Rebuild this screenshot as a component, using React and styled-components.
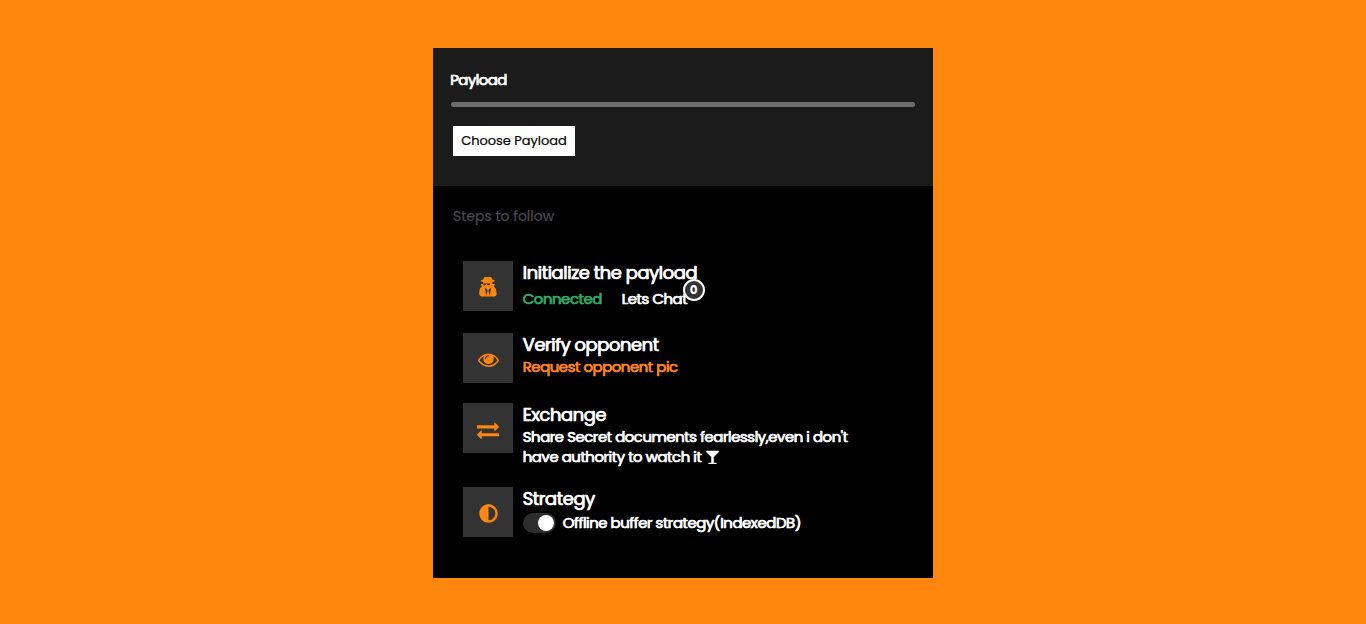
import React, { useState } from 'react';
import styled, { createGlobalStyle } from 'styled-components';
import { FaAdjust } from 'react-icons/fa';

const GlobalStyle = createGlobalStyle`
  * {
    box-sizing: border-box;
  }

  body {
    margin: 0;
    background: #ff870d;
    font-family: Poppins, Inter, 'Liberation Sans', sans-serif;
  }
`;

const SecretIcon = () => (
  <svg viewBox='0 0 1792 1792' fill='currentColor'>
    <path d='M768 1536l96-448-96-128-128-64zm256 0l128-640-128 64-96 128zM1312 526q-2-4-4-6-10-8-96-8-70 0-167 19-7 2-149 2t-149-2q-97-19-167-19-86 0-96 8-2 2-4 6 2 18 4 27 15 10 22 31 25 100 130 100 70 0 92-68 12-44 28-44h40q16 0 28 44 22 68 92 68 105 0 130-100 7-21 22-31 2-9 4-27zm304 807q0 121-73 190t-194 69h-906q-121 0-194-69t-73-190q0-61 4.500-118t19-125.500 37.500-123.500 63.500-103.500 93.500-74.500l-90-220h214q-22-64-22-128 0-12 2-32-194-40-194-96 0-57 210-99 17-62 51.500-134t70.500-114q32-37 76-37 30 0 84 31t84 31 84-31 84-31q44 0 76 37 36 42 70.500 114t51.500 134q210 42 210 99 0 56-194 96 7 81-20 160h214l-82 225q63 33 107.500 96.500t65.500 143.500 29 151.500 8 148.500z' fillRule='evenodd' />
  </svg>
);

const EyeIcon = () => (
  <svg viewBox='0 0 1792 1792' fill='currentColor'>
    <path d='M1664 960q-152-236-381-353 61 104 61 225 0 185-131.5 316.5t-316.5 131.5-316.5-131.5-131.5-316.5q0-121 61-225-229 117-381 353 133 205 333.5 326.5t434.5 121.5 434.5-121.5 333.5-326.5zm-720-384q0-20-14-34t-34-14q-125 0-214.5 89.5t-89.5 214.5q0 20 14 34t34 14 34-14 14-34q0-86 61-147t147-61q20 0 34-14t14-34zm848 384q0 34-20 69-140 230-376.5 368.5t-499.5 138.5-499.5-139-376.5-368q-20-35-20-69t20-69q140-229 376.5-368t499.5-139 499.5 139 376.5 368q20 35 20 69z' />
  </svg>
);

const ExchangeIcon = () => (
  <svg viewBox='0 0 1792 1792' fill='currentColor'>
    <path d='M1792 1184v192q0 13-9.5 22.5t-22.5 9.5h-1376v192q0 13-9.5 22.5t-22.5 9.5q-12 0-24-10l-319-320q-9-9-9-22 0-14 9-23l320-320q9-9 23-9 13 0 22.5 9.5t9.5 22.5v192h1376q13 0 22.5 9.5t9.5 22.5zm0-544q0 14-9 23l-320 320q-9 9-23 9-13 0-22.5-9.5t-9.5-22.5v-192h-1376q-13 0-22.5-9.5t-9.5-22.5v-192q0-13 9.5-22.5t22.5-9.5h1376v-192q0-14 9-23t23-9q12 0 24 10l319 319q9 9 9 23z' />
  </svg>
);

const GlassIcon = () => (
  <svg viewBox='0 0 1792 1792' fill='currentColor' stroke='currentColor' strokeWidth='70'>
    <path d='M1699 186q0 35-43 78l-632 632v768h320q26 0 45 19t19 45-19 45-45 19h-896q-26 0-45-19t-19-45 19-45 45-19h320v-768l-632-632q-43-43-43-78 0-23 18-36.5t38-17.5 43-4h1408q23 0 43 4t38 17.5 18 36.5z' />
  </svg>
);

function App () {
  const [offline, setOffline] = useState(true);

  return (
    <Page>
      <GlobalStyle />
      <Card>
        <PayloadSection>
          <PayloadTitle>Payload</PayloadTitle>
          <Progress />
          <ChooseButton>Choose Payload</ChooseButton>
        </PayloadSection>

        <Steps>
          <StepsTitle>Steps to follow</StepsTitle>

          <Step $height={72}>
            <IconBox $size={22}><SecretIcon /></IconBox>
            <StepBody>
              <StepName>Initialize the payload</StepName>
              <StatusRow>
                <StepText $color='#35a864'>Connected</StepText>
                <Chat>
                  <StepText>Lets Chat</StepText>
                  <Badge>0</Badge>
                </Chat>
              </StatusRow>
            </StepBody>
          </Step>

          <Step $height={70}>
            <IconBox $size={21}><EyeIcon /></IconBox>
            <StepBody>
              <StepName>Verify opponent</StepName>
              <StepText $color='#ff8420'>Request opponent pic</StepText>
            </StepBody>
          </Step>

          <Step $height={84}>
            <IconBox $size={22}><ExchangeIcon /></IconBox>
            <StepBody>
              <StepName>Exchange</StepName>
              <StepText>Share Secret documents fearlessly,even i don't</StepText>
              <StepText>have authority to watch it <GlassIcon /></StepText>
            </StepBody>
          </Step>

          <Step $height={50}>
            <IconBox $size={19}><FaAdjust /></IconBox>
            <StepBody>
              <StepName>Strategy</StepName>
              <SwitchRow>
                <Switch $on={offline} onClick={() => setOffline(!offline)} />
                <StepText>Offline buffer strategy(IndexedDB)</StepText>
              </SwitchRow>
            </StepBody>
          </Step>
        </Steps>
      </Card>
    </Page>
  );
}

export default App;

const Page = styled.div`
  display: flex;
  justify-content: center;
  align-items: flex-start;
  height: 624px;
  padding-top: 48px;
`;

const Card = styled.div`
  width: 500px;
  height: 530px;
  background: #000;
`;

const PayloadSection = styled.section`
  height: 138px;
  padding: 20px 18px 0 17px;
  background: #1b1b1b;
`;

const PayloadTitle = styled.h1`
  margin: 0;
  color: #fff;
  font-size: 15px;
  font-weight: 400;
  line-height: 24px;
  letter-spacing: -0.6px;
  -webkit-text-stroke: 0.45px currentColor;
  text-shadow: 0.5px 0 currentColor;
`;

const Progress = styled.div`
  height: 5px;
  margin: 10px 0 19px 1px;
  border-radius: 3px;
  background: #6d6d6d;
`;

const ChooseButton = styled.button`
  display: block;
  width: 122px;
  height: 30px;
  margin-left: 3px;
  padding: 0;
  border: 0;
  background: #fff;
  color: #000;
  font-family: inherit;
  font-size: 13px;
  font-weight: 400;
  letter-spacing: -0.03px;
  white-space: nowrap;
  cursor: pointer;
  -webkit-text-stroke: 0.2px currentColor;
`;

const Steps = styled.section`
  padding: 20px 20px 0;
`;

const StepsTitle = styled.h2`
  margin: 0 0 35px;
  color: #4b4950;
  font-size: 14px;
  font-weight: 400;
  line-height: 20px;
  -webkit-text-stroke: 0.2px currentColor;
`;

const Step = styled.div`
  display: flex;
  height: ${props => props.$height}px;
  padding-left: 10px;
`;

const IconBox = styled.div`
  display: flex;
  flex: none;
  align-items: center;
  justify-content: center;
  width: 50px;
  height: 50px;
  padding-top: 3px;
  background: #333;
  color: #ff870d;

  svg {
    width: ${props => props.$size}px;
    height: ${props => props.$size}px;
  }
`;

const StepBody = styled.div`
  padding-left: 9.5px;
`;

const StepName = styled.h3`
  margin: 0;
  color: #fff;
  font-size: 18px;
  font-weight: 400;
  line-height: 24px;
  letter-spacing: -0.5px;
  white-space: nowrap;
  -webkit-text-stroke: 0.5px currentColor;
  text-shadow: 0.5px 0 currentColor;
`;

const StepText = styled.p`
  margin: 0;
  color: ${props => props.$color || '#fff'};
  font-size: 15px;
  font-weight: 400;
  line-height: 20px;
  letter-spacing: -0.51px;
  white-space: nowrap;
  -webkit-text-stroke: 0.45px currentColor;
  text-shadow: 0.5px 0 currentColor;

  svg {
    width: 15px;
    height: 14px;
    vertical-align: -2px;
  }
`;

const StatusRow = styled.div`
  display: flex;
  gap: 20px;
  padding-top: 4px;
`;

const Chat = styled.div`
  position: relative;
`;

const Badge = styled.span`
  position: absolute;
  top: -10px;
  left: 61px;
  display: flex;
  align-items: center;
  justify-content: center;
  width: 22px;
  height: 22px;
  border: 2px solid #fff;
  border-radius: 50%;
  background: #333;
  color: #fff;
  font-size: 12px;
  font-weight: 700;
`;

const SwitchRow = styled.div`
  display: flex;
  align-items: center;
  gap: 7px;
  padding-top: 2px;
`;

const Switch = styled.button`
  display: flex;
  align-items: center;
  justify-content: ${props => (props.$on ? 'flex-end' : 'flex-start')};
  width: 33px;
  height: 20px;
  padding: 0 2px;
  border: 0;
  border-radius: 10px;
  background: #2d2d2d;
  cursor: pointer;

  &::after {
    content: '';
    width: 16px;
    height: 16px;
    border-radius: 50%;
    background: #fff;
  }
`;
